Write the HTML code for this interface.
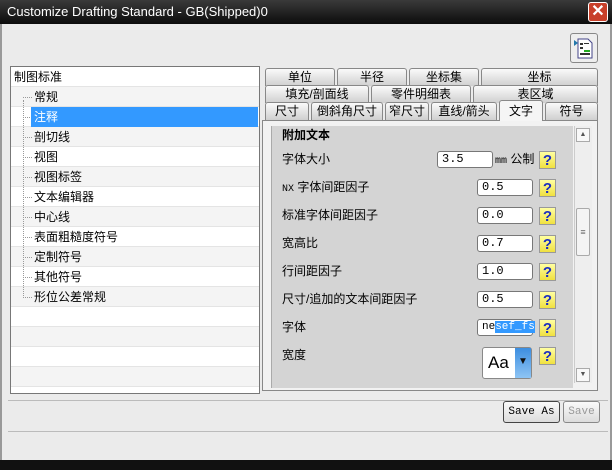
<!DOCTYPE html>
<html><head><meta charset="utf-8"><style>
*{margin:0;padding:0;box-sizing:border-box}
body{width:612px;height:470px;overflow:hidden;background:#ebebeb;font-family:"Liberation Sans","Noto Sans CJK SC",sans-serif;font-size:12px;color:#000;position:relative}
.a{position:absolute}
.title{left:0;top:0;width:612px;height:24px;background:linear-gradient(#3a3a3a,#0c0c0c);color:#fff;font-size:13px;line-height:24px;padding-left:7px}
.close{right:4px;top:2px;width:20px;height:20px;background:#c8402a;border:1px solid #fff;border-radius:3px;color:#fff;font-size:16px;line-height:17px;text-align:center;font-weight:bold}
.tree{left:10px;top:66px;width:250px;height:328px;border:1px solid #777;background:#fff}
.row{position:absolute;left:0;width:248px;height:20px;border-bottom:1px solid #e4e4e4;line-height:20px;font-size:12px}
.row:nth-child(even){background:#f4f4f4}
.st{position:absolute;left:12px;top:10px;width:9px;border-top:1px dotted #999}
.tab{position:absolute;height:18px;border:1px solid #888;border-bottom:none;border-radius:3px 3px 0 0;background:linear-gradient(#fafafa,#cfcfcf);text-align:center;line-height:17px;font-size:12px}
.lbl{position:absolute;left:282px;font-size:12px}
.inp{position:absolute;height:17px;border:1px solid #777;border-radius:3px;background:#fff;font-family:"Liberation Mono",monospace;font-size:12px;line-height:15px;padding-left:4px}
.q{position:absolute;width:17px;height:18px;background:linear-gradient(#ffffa0,#f0e040);border:1px solid #999;color:#1a2dc0;font-weight:bold;font-size:15px;line-height:17px;text-align:center}
.btn{position:absolute;height:22px;border:1px solid #888;border-radius:3px;background:linear-gradient(#fafafa,#dcdcdc);font-family:"Liberation Mono",monospace;font-size:11px;line-height:20px;text-align:center}
</style></head><body>
<div class="a title">Customize Drafting Standard - GB(Shipped)0</div>
<div class="a close">✕</div>
<div class="a" style="left:0;top:24px;width:2px;height:440px;background:#999"></div>
<div class="a" style="right:0;top:24px;width:2px;height:440px;background:#999"></div>
<div class="a" style="left:570px;top:33px;width:28px;height:30px;border:1px solid #888;border-radius:3px;background:#eee">
<svg width="26" height="28"><path d="M7 5h10l4 4v15H7z" fill="#fff" stroke="#448"/><path d="M3 6l4 3-4 3z" fill="#27a"/><rect x="9" y="9" width="3" height="2" fill="#333"/><rect x="13" y="9" width="5" height="1" fill="#333"/><rect x="9" y="13" width="3" height="2" fill="#333"/><rect x="13" y="16" width="6" height="2" fill="#2a2"/><rect x="9" y="19" width="10" height="2" fill="#333"/></svg></div>
<div class="a tree">
<div class="row" style="top:0;padding-left:3px">制图标准</div>
<div class="row" style="top:20px;padding-left:23px"><i class="st"></i>常规</div>
<div class="row" style="top:40px;padding-left:23px"><i class="st"></i><span style="position:absolute;left:20px;top:0;width:227px;height:20px;background:#3399ff;color:#fff;padding-left:3px">注释</span></div>
<div class="row" style="top:60px;padding-left:23px"><i class="st"></i>剖切线</div>
<div class="row" style="top:80px;padding-left:23px"><i class="st"></i>视图</div>
<div class="row" style="top:100px;padding-left:23px"><i class="st"></i>视图标签</div>
<div class="row" style="top:120px;padding-left:23px"><i class="st"></i>文本编辑器</div>
<div class="row" style="top:140px;padding-left:23px"><i class="st"></i>中心线</div>
<div class="row" style="top:160px;padding-left:23px"><i class="st"></i>表面粗糙度符号</div>
<div class="row" style="top:180px;padding-left:23px"><i class="st"></i>定制符号</div>
<div class="row" style="top:200px;padding-left:23px"><i class="st"></i>其他符号</div>
<div class="row" style="top:220px;padding-left:23px"><i class="st"></i>形位公差常规</div>
<div class="row" style="top:240px"></div><div class="row" style="top:260px"></div><div class="row" style="top:280px"></div><div class="row" style="top:300px"></div>
<div class="a" style="left:12px;top:33px;width:1px;height:198px;border-left:1px dotted #999"></div>
</div>
<!-- tabs -->
<div class="tab" style="left:265px;top:68px;width:70px">单位</div>
<div class="tab" style="left:337px;top:68px;width:70px">半径</div>
<div class="tab" style="left:409px;top:68px;width:70px">坐标集</div>
<div class="tab" style="left:481px;top:68px;width:117px">坐标</div>
<div class="tab" style="left:265px;top:85px;width:104px">填充/剖面线</div>
<div class="tab" style="left:371px;top:85px;width:100px">零件明细表</div>
<div class="tab" style="left:473px;top:85px;width:125px">表区域</div>
<div class="tab" style="left:265px;top:102px;width:44px">尺寸</div>
<div class="tab" style="left:311px;top:102px;width:72px">倒斜角尺寸</div>
<div class="tab" style="left:385px;top:102px;width:44px">窄尺寸</div>
<div class="tab" style="left:431px;top:102px;width:66px">直线/箭头</div>
<div class="tab" style="left:499px;top:100px;width:44px;height:21px;background:#f5f5f5;z-index:2;line-height:20px">文字</div>
<div class="tab" style="left:545px;top:102px;width:53px">符号</div>
<div class="a" style="left:262px;top:120px;width:336px;height:271px;border:1px solid #888;background:#f2f2f2"></div>
<div class="a" style="left:271px;top:126px;width:302px;height:262px;background:#d4d4d4;border-left:1px solid #aaa"></div>
<div class="a" style="left:574px;top:126px;width:18px;height:257px;background:#eee;border-left:1px solid #ccc"></div>
<div class="a" style="left:576px;top:128px;width:14px;height:14px;border:1px solid #aaa;background:#f8f8f8;font-size:7px;text-align:center;line-height:12px;color:#555">▲</div>
<div class="a" style="left:576px;top:208px;width:14px;height:48px;border:1px solid #aaa;border-radius:2px;background:#f4f4f4;font-size:9px;text-align:center;line-height:46px;color:#666">≡</div>
<div class="a" style="left:576px;top:368px;width:14px;height:14px;border:1px solid #aaa;background:#f8f8f8;font-size:7px;text-align:center;line-height:12px;color:#555">▼</div>
<div class="lbl" style="top:126px;font-weight:bold">附加文本</div>
<div class="lbl" style="top:150px">字体大小</div>
<div class="inp" style="left:437px;top:151px;width:56px">3.5</div>
<div class="a" style="left:495px;top:150px;font-size:12px"><span style="font-family:'Liberation Mono';font-size:10px">mm</span> 公制</div>
<div class="q" style="left:539px;top:151px">?</div>
<div class="lbl" style="top:178px"><span style="font-family:'Liberation Mono';font-size:10px">NX</span> 字体间距因子</div>
<div class="inp" style="left:477px;top:179px;width:56px">0.5</div><div class="q" style="left:539px;top:179px">?</div>
<div class="lbl" style="top:206px">标准字体间距因子</div>
<div class="inp" style="left:477px;top:207px;width:56px">0.0</div><div class="q" style="left:539px;top:207px">?</div>
<div class="lbl" style="top:234px">宽高比</div>
<div class="inp" style="left:477px;top:235px;width:56px">0.7</div><div class="q" style="left:539px;top:235px">?</div>
<div class="lbl" style="top:262px">行间距因子</div>
<div class="inp" style="left:477px;top:263px;width:56px">1.0</div><div class="q" style="left:539px;top:263px">?</div>
<div class="lbl" style="top:290px">尺寸/追加的文本间距因子</div>
<div class="inp" style="left:477px;top:291px;width:56px">0.5</div><div class="q" style="left:539px;top:291px">?</div>
<div class="lbl" style="top:318px">字体</div>
<div class="inp" style="left:477px;top:319px;width:56px;font-size:11px">ne<span style="background:#3399ff;color:#fff">sef_fs</span></div><div class="q" style="left:539px;top:319px">?</div>
<div class="lbl" style="top:346px">宽度</div>
<div class="a" style="left:482px;top:347px;width:50px;height:32px;border:1px solid #888;border-radius:3px;background:#fff;font-size:17px;line-height:30px;padding-left:5px">Aa</div>
<div class="a" style="left:515px;top:348px;width:16px;height:30px;background:linear-gradient(#3d8ee0,#8ec4f4);color:#111;font-size:10px;text-align:center;line-height:28px">▼</div>
<div class="q" style="left:539px;top:347px">?</div>
<div class="a" style="left:8px;top:400px;width:600px;height:1px;background:#bbb"></div>
<div class="btn" style="left:503px;top:401px;width:57px;border-color:#444">Save As</div>
<div class="btn" style="left:563px;top:401px;width:37px;color:#999">Save</div>
<div class="a" style="left:8px;top:431px;width:600px;height:1px;background:#bbb"></div>
<div class="a" style="left:0;top:460px;width:612px;height:10px;background:#111"></div>
</body></html>
